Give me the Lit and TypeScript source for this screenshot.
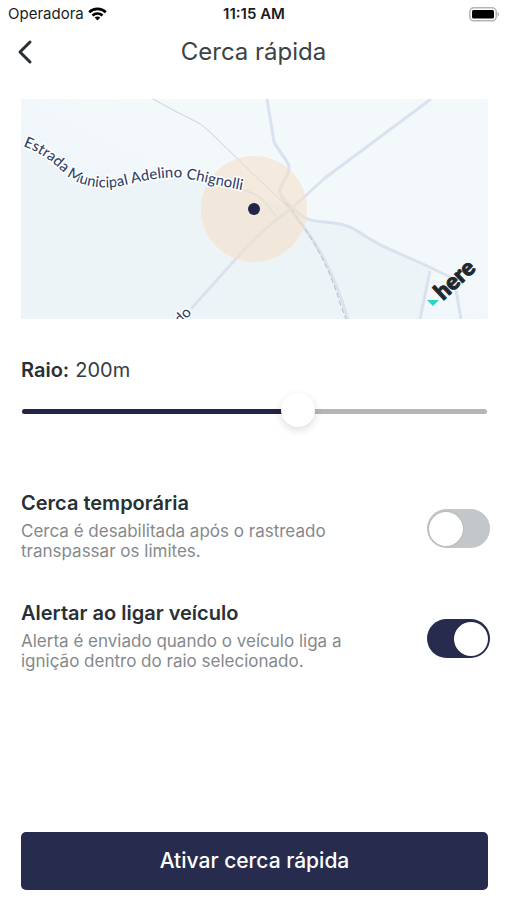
import { LitElement, html, css, svg } from "lit";
import { customElement, property, state } from "lit/decorators.js";

@customElement("status-bar")
class StatusBar extends LitElement {
  static styles = css`
    :host {
      display: grid;
      grid-template-columns: 1fr auto 1fr;
      align-items: center;
      height: 28px;
      padding: 0 7px 0 8px;
      color: #1c1c1e;
      font-size: 15px;
      line-height: 20px;
    }
    .carrier { display: flex; align-items: center; gap: 4px; }
    .time { font-weight: 600; }
    .battery { justify-self: end; }
    svg { display: block; }
  `;
  render() {
    return html`
      <div class="carrier">
        <span>Operadora</span>
        <svg width="19" height="14" viewBox="0 0 19 14" fill="none" stroke="#000" stroke-width="2.6" aria-label="Wi-Fi">
          <path d="M1.2 5.2C5.800 .7 13.200 .7 17.800 5.200" />
          <path d="M4.500 8.500C7.300 5.800 11.700 5.800 14.500 8.500" />
          <path d="M9.500 13.400L6.700 10.600C8.300 9.100 10.700 9.100 12.300 10.600Z" fill="#000" stroke="none" />
        </svg>
      </div>
      <span class="time">11:15 AM</span>
      <svg class="battery" width="31" height="15" viewBox="0 0 31 15" aria-label="Bateria">
        <rect x=".8" y=".8" width="26.400" height="13" rx="4" fill="#fff" stroke="#b4b4b4" stroke-width="1.500" />
        <rect x="3" y="3" width="22" height="8.600" rx="1.500" fill="#000" />
        <path d="M28.500 5v4.600c2-.6 2-4 0-4.600z" fill="#b4b4b4" />
      </svg>
    `;
  }
}

@customElement("fence-map")
class FenceMap extends LitElement {
  static styles = css`
    :host { display: block; }
    svg { display: block; width: 100%; height: auto; }
    .field { fill: #edf4f7; }
    .road { fill: none; stroke: #dbe2ee; stroke-width: 3; stroke-linejoin: round; }
    .minor { stroke-width: 2; }
    .rail { fill: none; stroke: #cdd2d6; stroke-width: 1; }
    .dash { stroke: #b4babd; stroke-dasharray: 5 3; }
    .radius { fill: #f4dfc4; fill-opacity: 0.55; }
    .pin { fill: #23244a; }
    .label {
      font-family: Lato, sans-serif;
      font-size: 15px;
      font-weight: 500;
      fill: #34436a;
      stroke: #fff;
      stroke-width: 3;
      stroke-linejoin: round;
      paint-order: stroke;
    }
    .brand {
      font-family: Lato, sans-serif;
      font-size: 23px;
      font-weight: 900;
      fill: #22272b;
      stroke: #22272b;
      stroke-width: 1;
      stroke-linejoin: round;
    }
    .mark { fill: #2fd3c5; }
  `;
  render() {
    return html`<svg viewBox="0 0 467 220" role="img" aria-label="Mapa da cerca">${svg`
      <defs>
        <linearGradient id="terra" x1="0" y1="1" x2="1" y2="0">
          <stop offset="0.3" stop-color="#eef5f8" />
          <stop offset="0.6" stop-color="#f3f8fb" />
        </linearGradient>
        <path id="estrada" d="M2 47C18 53 31 62 43 74C56 87 80 91 100 87C125 81 145 77 162 79C185 83 205 89 250 96" />
        <path id="avenida" d="M159 226L189 197" />
      </defs>
      <rect fill="url(#terra)" width="467" height="220" />
      <path class="field" d="M0 47C18 53 31 62 43 74C56 87 80 91 100 87C125 81 145 77 162 79C185 83 205 89 242 101L271 109Q284 121 294 122L313 124Q328 126 338 133Q354 144 368 150L409 170L399 220H0Z" />
      <path class="road" d="M246 0L253 43Q257 50 265 61Q270 68 267 74L259 90Q259 96 263 102L284 130Q311 165 327 221" />
      <path class="road" d="M410 0L304 79L271 109L258 119Q239 133 221 153L170 210" />
      <path class="road minor" d="M215 89Q235 94 242 101L257 120" />
      <path class="road" d="M261 98L271 109Q284 121 294 122L313 124Q328 126 338 133Q354 144 368 150L404 166L429 178" />
      <path class="road" d="M409 172L399 220M433 180L440 220" />
      <path class="rail" d="M132 0Q159 15 170 20Q180 24 189 33L231 74L265 106" />
      <path class="rail dash" d="M265 104Q290 135 305 167Q313 184 319 204L325 220" />
      <circle class="radius" cx="233" cy="110" r="53" />
      <circle class="pin" cx="233" cy="110" r="6" />
      <text class="label"><textPath href="#estrada">Estrada Municipal Adelino Chignolli</textPath></text>
      <text class="label"><textPath href="#avenida">do</textPath></text>
      <path class="mark" d="M406 201H418L412 207Z" />
      <text class="brand" transform="translate(422 202) rotate(-43)">here</text>
    `}</svg>`;
  }
}

@customElement("radius-slider")
class RadiusSlider extends LitElement {
  @property({ type: Number }) value = 200;
  static styles = css`
    :host { display: flex; flex-direction: column; gap: 12px; }
    .caption { display: flex; gap: 6px; font-size: 20px; line-height: 24px; color: #353d42; }
    .name { font-weight: 600; color: #273035; }
    .range {
      appearance: none;
      display: block;
      width: 100%;
      height: 34px;
      margin: 0;
      padding: 0 1px;
      box-sizing: border-box;
      background: none;
    }
    .range::-webkit-slider-runnable-track {
      height: 5px;
      border-radius: 3px;
      background: linear-gradient(to right, #23234a var(--fill), #b2b6b8 var(--fill));
    }
    .range::-webkit-slider-thumb {
      appearance: none;
      width: 34px;
      height: 34px;
      margin-top: -16px;
      border-radius: 50%;
      background: #fff;
      box-shadow: 0 3px 8px rgba(0, 0, 0, 0.14);
    }
  `;
  render() {
    const fill = ((this.value - 50) / 250) * 100;
    return html`
      <div class="caption">
        <label class="name" for="raio">Raio:</label>
        <output for="raio">${this.value}m</output>
      </div>
      <input class="range" id="raio" type="range" min="50" max="300" step="10"
        style="--fill: ${fill}%" .value=${String(this.value)}
        @input=${(e: Event) => (this.value = Number((e.target as HTMLInputElement).value))} />
    `;
  }
}

@customElement("toggle-row")
class ToggleRow extends LitElement {
  @property() heading = "";
  @property() detail = "";
  @property({ type: Boolean }) on = false;
  static styles = css`
    :host { display: flex; align-items: flex-end; justify-content: space-between; gap: 24px; }
    .text { max-width: 340px; }
    .heading { display: block; font-size: 20px; line-height: 24px; font-weight: 600; color: #273035; }
    .detail { margin: 6px 0 0; font-size: 17px; line-height: 20px; color: #85898c; }
    .switch {
      appearance: none;
      flex: none;
      box-sizing: border-box;
      width: 63px;
      height: 39px;
      margin: 0 0 13px;
      padding: 2px;
      border-radius: 20px;
      background: #c3c7c9;
      display: flex;
      align-items: center;
    }
    .switch::before {
      content: "";
      width: 34px;
      height: 34px;
      border-radius: 50%;
      background: #fff;
      box-shadow: 0 0 2px rgba(0, 0, 0, 0.2);
    }
    .switch:checked { background: #272c4e; justify-content: flex-end; }
  `;
  render() {
    return html`
      <div class="text">
        <label class="heading" for="switch">${this.heading}</label>
        <p class="detail" id="detail">${this.detail}</p>
      </div>
      <input class="switch" id="switch" type="checkbox" role="switch" aria-describedby="detail"
        .checked=${this.on} @change=${() => (this.on = !this.on)} />
    `;
  }
}

@customElement("app-root")
class AppRoot extends LitElement {
  @state() private radius = 200;
  static styles = css`
    :host {
      display: flex;
      flex-direction: column;
      box-sizing: border-box;
      min-height: 100vh;
      padding-bottom: 10px;
      background: #fff;
      font-family: Inter, "Liberation Sans", sans-serif;
    }
    .header {
      display: grid;
      grid-template-columns: 32px 1fr 32px;
      align-items: center;
      height: 48px;
      padding: 0 9px;
    }
    .back {
      display: flex;
      align-items: center;
      justify-content: center;
      width: 32px;
      height: 40px;
      padding: 0;
      border: 0;
      background: none;
    }
    .title { margin: 0; text-align: center; font-size: 24px; line-height: 32px; font-weight: 400; color: #3b4347; }
    .main { flex: 1; display: flex; flex-direction: column; padding: 23px 19px 0 21px; }
    .radius { margin-top: 39px; }
    .options { display: flex; flex-direction: column; gap: 40px; margin: 63px -2px 40px 0; }
    .submit {
      margin-top: auto;
      height: 58px;
      border: 0;
      border-radius: 5px;
      background: #272c4e;
      color: #fff;
      font: 500 21px/24px Inter, "Liberation Sans", sans-serif;
    }
  `;
  render() {
    return html`
      <status-bar></status-bar>
      <header class="header">
        <button class="back" aria-label="Voltar">
          <svg width="18" height="26" viewBox="0 0 18 26" fill="none" stroke="#273035" stroke-width="3" stroke-linecap="round" stroke-linejoin="round">
            <path d="M14 3L4 13L14 23" />
          </svg>
        </button>
        <h1 class="title">Cerca rápida</h1>
      </header>
      <main class="main">
        <fence-map></fence-map>
        <radius-slider class="radius" .value=${this.radius}></radius-slider>
        <section class="options">
          <toggle-row heading="Cerca temporária" detail="Cerca é desabilitada após o rastreado transpassar os limites."></toggle-row>
          <toggle-row heading="Alertar ao ligar veículo" detail="Alerta é enviado quando o veículo liga a ignição dentro do raio selecionado." on></toggle-row>
        </section>
        <button class="submit">Ativar cerca rápida</button>
      </main>
    `;
  }
}
